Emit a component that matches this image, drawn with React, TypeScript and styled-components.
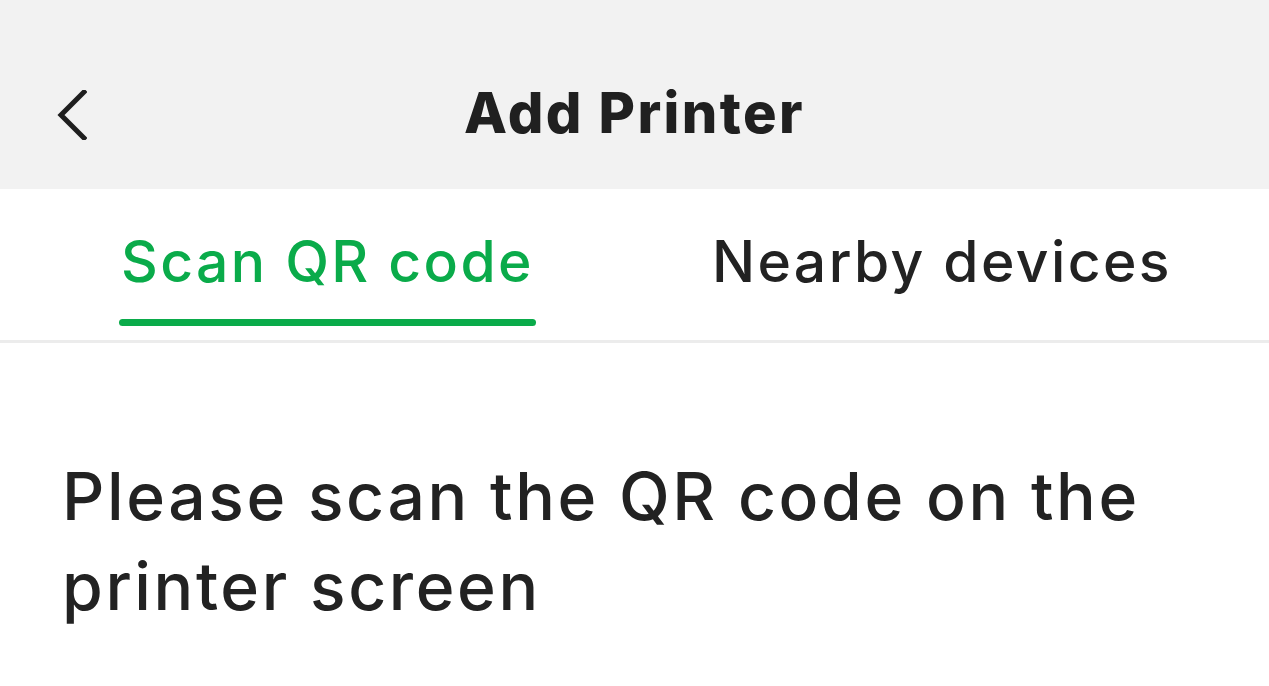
import React, { useState } from "react";
import styled, { createGlobalStyle } from "styled-components";

const GlobalStyle = createGlobalStyle`
  html, body { margin: 0; padding: 0; background: #ffffff; }
  body { font-family: Inter, "Noto Sans", "Liberation Sans", sans-serif; color: #222222; }
  * { box-sizing: border-box; }
`;

const Page = styled.div`
  width: 1269px;
  height: 686px;
  overflow: hidden;
  background: #ffffff;
  display: flex;
  flex-direction: column;
`;

const Header = styled.header`
  height: 189px;
  background: #f2f2f2;
  padding-top: 36px;
  display: grid;
  grid-template-columns: 1fr auto 1fr;
  align-items: center;
`;

const BackButton = styled.button`
  justify-self: start;
  margin-left: 55px;
  margin-top: 4px;
  width: 34px;
  height: 52px;
  padding: 0;
  border: none;
  background: transparent;
  display: flex;
  align-items: center;
  justify-content: center;
  cursor: pointer;
`;

const Title = styled.h1`
  margin: 0;
  font-size: 56px;
  line-height: 68px;
  font-weight: 800;
  letter-spacing: 2.4px;
  color: #202020;
`;

const Tabs = styled.nav`
  height: 154px;
  border-bottom: 3px solid #ececec;
  display: flex;
  padding-left: 119px;
  gap: 174px;
`;

const Tab = styled.button<{ $active: boolean }>`
  border: none;
  background: transparent;
  padding: 39px 0 0;
  display: flex;
  flex-direction: column;
  align-items: stretch;
  cursor: pointer;
  font-family: inherit;
  color: ${(p) => (p.$active ? "#0aab4a" : "#222222")};
`;

const TabLabel = styled.span`
  font-size: 57px;
  line-height: 68px;
  font-weight: 500;
  letter-spacing: 2.4px;
  padding: 0 2px;
  white-space: nowrap;
`;

const Indicator = styled.span<{ $active: boolean }>`
  display: block;
  margin-top: 23px;
  height: 7px;
  border-radius: 4px;
  background: ${(p) => (p.$active ? "#0aab4a" : "transparent")};
`;

const Body = styled.main`
  padding: 108px 62px 0;
`;

const Instruction = styled.p`
  margin: 0;
  font-size: 66px;
  line-height: 90px;
  font-weight: 500;
  letter-spacing: 2.6px;
  color: #222222;
  max-width: 1170px;
`;

export default function App() {
  const [tab, setTab] = useState(0);
  const tabs = ["Scan QR code", "Nearby devices"];
  return (
    <>
      <GlobalStyle />
      <Page>
        <Header>
          <BackButton aria-label="Back">
            <svg width="30" height="50" viewBox="0 0 30 50">
              <polyline
                points="27,2 4,25 27,48"
                fill="none"
                stroke="#1f1f1f"
                strokeWidth="5"
                strokeLinecap="square"
                strokeLinejoin="miter"
              />
            </svg>
          </BackButton>
          <Title>Add Printer</Title>
          <span />
        </Header>
        <Tabs>
          {tabs.map((t, i) => (
            <Tab key={t} $active={tab === i} onClick={() => setTab(i)}>
              <TabLabel>{t}</TabLabel>
              <Indicator $active={tab === i} />
            </Tab>
          ))}
        </Tabs>
        <Body>
          <Instruction>Please scan the QR code on the printer screen</Instruction>
        </Body>
      </Page>
    </>
  );
}
